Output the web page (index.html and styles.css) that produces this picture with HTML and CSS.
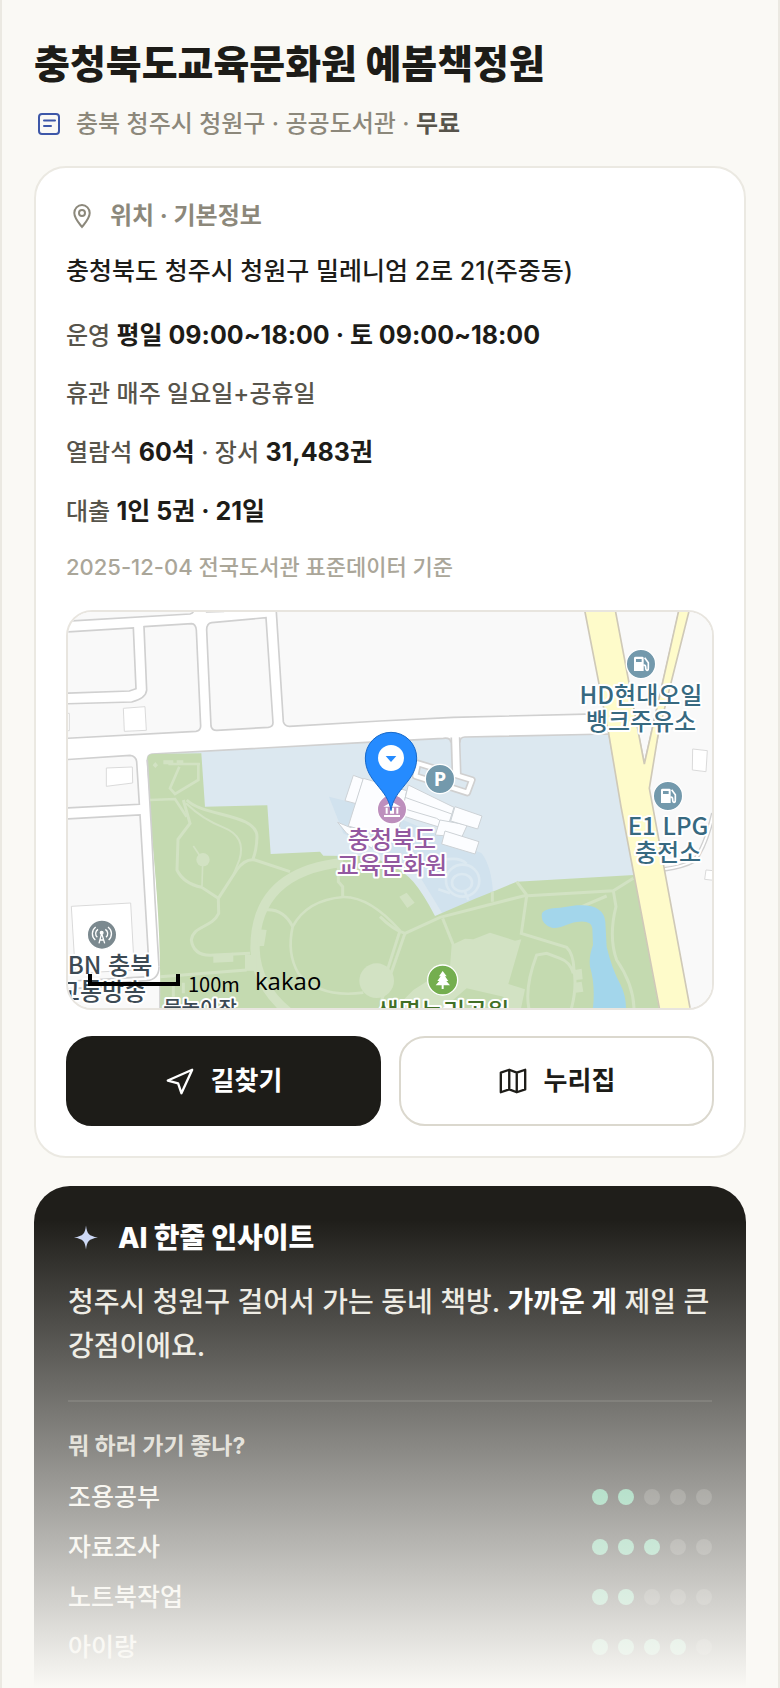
FILE: index.html
```html
<!DOCTYPE html>
<html lang="ko">
<head>
	<meta charset="utf-8">
	<meta name="viewport" content="width=device-width, initial-scale=1">
	<title>충청북도교육문화원 예봄책정원</title>
	<link rel="stylesheet" href="styles.css">
</head>
<body>
	<main class="screen">
		<header class="head">
			<h1>충청북도교육문화원 예봄책정원</h1>
			<p class="meta">
				<svg class="meta-icon" viewBox="0 0 30 30" fill="none" stroke="#3d57a8" stroke-width="2" stroke-linecap="round"><rect x="5" y="5" width="20" height="20" rx="3"/><path d="M10 11.5h11M10 17h7"/></svg>
				<span>충북 청주시 청원구 · 공공도서관 · <b>무료</b></span>
			</p>
		</header>

		<section class="card">
			<h2 class="card-title">
				<svg viewBox="0 0 32 32" fill="none" stroke="#8c887b" stroke-width="2"><path d="M16 27C12 22 8.300 18 8.300 13A7.700 8 0 0 1 23.700 13C23.700 18 20 22 16 27Z"/><circle cx="16" cy="13" r="3"/></svg>
				위치 · 기본정보
			</h2>
			<p class="address">충청북도 청주시 청원구 밀레니엄 2로 21(주중동)</p>
			<div class="info">
				<p>운영 <b>평일 09:00~18:00 · 토 09:00~18:00</b></p>
				<p>휴관 매주 일요일+공휴일</p>
				<p>열람석 <b>60석</b> · 장서 <b>31,483권</b></p>
				<p>대출 <b>1인 5권 · 21일</b></p>
			</div>
			<p class="source">2025-12-04 전국도서관 표준데이터 기준</p>

			<div class="map">
				<svg viewBox="0 0 644 396" preserveAspectRatio="xMidYMid slice" role="img" aria-label="지도">
					<!-- 지형은 3배 좌표로 그림 -->
					<g transform="scale(.33333) translate(-24 -36)" fill="none">
						<!-- 블록 -->
						<g fill="#f9f9f9" stroke="#d0d0d0" stroke-width="5">
							<path d="M0 65L390 42Q400 40 402 30V0H0Z"/>
							<path d="M440 36L490 34V0H440Z"/>
							<path d="M0 97L220 84L228 266L208 273L0 280Z"/>
							<path d="M252 80L395 71Q407 72 409 90L422 378Q422 392 408 394L0 416V312L215 306Q258 295 260 270Z"/>
							<path d="M440 90Q440 70 455 68L618 53L639 368Q639 380 625 382L470 391Q455 391 453 378Z"/>
							<path d="M648 20L670 365Q674 378 688 379L960 363L1180 352L1640 341L1600 20Z"/>
							<path d="M0 480L210 466Q228 468 230 485L238 613L0 625Z"/>
							<path d="M0 658L240 645L265 1065V1130L0 1145Z"/>
							<path d="M0 1168L300 1150V1240H0Z"/>
							<path d="M1660 20H1860L1753 492Z"/>
							<path d="M1880 20H1980V1240H1880L1760 560Z"/>
						</g>
						<g fill="#fff" stroke="#dadada" stroke-width="3">
							<path d="M190 325L255 320L259 391L193 394ZM139 504L217 501L218 549L139 559ZM10 340H28V392H10Z"/>
							<path d="M34 919L212 909L223 1110L46 1120Z"/>
							<path d="M1898 447L1942 452L1938 515L1897 510ZM1938 810L1970 813V842L1934 838Z"/>
						</g>
						<path d="M1812 808Q1870 800 1902 782Q1935 745 1960 640" stroke="#d0d0d0" stroke-width="14"/>
						<path d="M1812 808Q1870 800 1902 782Q1935 745 1960 640" stroke="#fff" stroke-width="6"/>
						<path d="M297 1100Q297 1138 260 1142L150 1150" stroke="#d0d0d0" stroke-width="5"/>

						<!-- 부지, 공원 -->
						<path d="M262 480Q262 464 276 462L960 425L1150 415Q1170 412 1172 425H1200Q1200 412 1215 411L1647 402L1726 840L1000 1000L300 960Z" fill="#dce8f0" stroke="#d0d0d0" stroke-width="5"/>
						<path d="M807 590L870 606L1030 660L1265 760Q1295 800 1299 880L1150 945L1080 830L850 700Z" fill="#d1e2ee"/>
						<path d="M262 480Q262 464 276 462L424 460L435 620L622 616L632 762L780 755L790 767L900 768Q1000 780 1060 845Q1090 880 1125 948L1245 896L1305 872L1370 845L1722 825L1800 1240H300Q305 1000 275 700Z" fill="#c4dab0"/>
						<path d="M262 480L275 700Q284 900 297 1100" stroke="#d0d0d0" stroke-width="5"/>
						<g stroke="#d2e2c3" stroke-width="9">
							<path d="M850 787Q585 815 585 1045Q588 1160 690 1240" stroke-width="28"/>
							<path d="M1020 992Q930 890 850 891Q740 900 698 980Q680 1060 715 1120Q780 1195 910 1178" stroke-width="8"/>
							<path d="M615 930Q670 925 698 980M835 800V845L848 860V890M1020 992L960 1180"/>
							<path d="M370 600L390 670L354 718L351 810Q370 850 425 862L475 895L476 940C455 985 400 975 394 1020Q400 1065 450 1066L570 1060"/>
							<path d="M475 895L530 810Q555 775 585 780L690 815M380 600C430 650 590 640 591 710Q590 750 578 780"/>
							<path d="M378 610Q430 660 490 682Q560 710 538 780L520 825" stroke-width="6"/>
							<path d="M400 738L420 768M428 790L426 858" stroke-width="5"/>
							<path d="M270 600L345 597L380 650M415 492V540L345 582L330 565L358 500M325 492H420" stroke-width="8"/>
							<path d="M310 487H340M350 487H370" stroke-width="12"/>
							<path d="M300 1130L560 1110M340 1155V1190M370 1148V1180"/>
							<path d="M960 950Q1000 990 1035 1000L1140 952L1390 888L1660 872L1720 835M1370 845L1400 885"/>
							<path d="M1400 888L1384 1000L1520 1042Q1540 1060 1542 1110Q1552 1170 1530 1240M1410 1240Q1390 1170 1430 1065L1460 1060L1500 1075Q1530 1085 1540 1120"/>
							<path d="M1560 922L1640 888M1660 872L1668 920Q1645 1010 1670 1080Q1725 1160 1722 1240"/>
							<path d="M1035 1000L965 1200M1148 955L1180 1035M1297 875V905"/>
						</g>
						<g fill="#d2e2c3">
							<circle cx="429" cy="779" r="20"/><circle cx="950" cy="1142" r="52"/>
							<path d="M597 988L620 990L612 1038H592ZM460 1064L520 1058V1085L460 1088ZM555 1065H590V1112H555ZM286 486L294 496L286 504L278 496ZM1018 890L1040 878L1064 908L1042 924Z"/>
							<path d="M1175 1035L1215 1016L1240 1018L1290 998L1365 1022L1384 1018L1345 1152L1395 1168L1380 1240H990L1060 1170L1170 1100Z"/>
							<path d="M1545 1110L1565 1106L1568 1138L1547 1140ZM1545 1148L1565 1145L1570 1175L1547 1178Z"/>
						</g>
						<path d="M1150 1225L1220 1165L1330 1190L1350 1240Z" fill="#c4dab0"/>
						<path d="M1446 940Q1452 925 1500 923L1550 916Q1630 910 1636 965L1640 1040Q1655 1105 1682 1155Q1700 1190 1698 1240H1597Q1608 1160 1590 1100Q1586 1070 1599 1035L1597 985Q1595 960 1550 966C1520 970 1500 988 1475 983Q1440 970 1446 940Z" fill="#a3d6eb"/>
						<g stroke="#dce9f1" stroke-width="8">
							<ellipse cx="1206" cy="848" rx="30" ry="26"/><ellipse cx="1208" cy="842" rx="50" ry="48"/><path d="M1170 880L1135 868M1215 875L1225 900M1150 780Q1200 770 1220 792"/>
						</g>

						<!-- 건물 -->
						<g fill="#fcfdff" stroke="#cdd2d6" stroke-width="3">
							<path d="M880 526L910 537L888 611L855 602Z"/>
							<path d="M910 535L1040 572L1010 720L865 678Z"/>
							<path d="M833 667L870 682L950 720L935 744L860 700Z"/>
							<path d="M1045 555L1182 622L1165 675L1028 625ZM1035 592L1175 642"/>
							<path d="M1028 625L1130 655L1150 668L1140 682L1020 645Z"/>
							<path d="M1140 660L1222 675L1205 712L1126 705Z"/>
							<path d="M1185 620L1266 648L1253 687L1172 663ZM1155 693L1257 725L1245 762L1145 732Z"/>
						</g>

						<!-- 주차장 길 -->
						<g stroke-linejoin="round">
							<path d="M1074 490L1066 528L1222 578L1236 540Z" stroke="#d0d0d0" stroke-width="22"/>
							<path d="M1186 412L1190 530" stroke="#d0d0d0" stroke-width="30"/>
							<path d="M1074 490L1066 528L1222 578L1236 540Z" stroke="#fff" stroke-width="12"/>
							<path d="M1186 400L1190 530" stroke="#fff" stroke-width="20"/>
						</g>

						<!-- 큰길 -->
						<path d="M1570 10L1575 36L1646 400L1683 620L1803 1250H1895L1768 565L1795 400L1893 10H1861L1753 492L1662 10Z" fill="#fefbca" stroke="#cfc9b8" stroke-width="5"/>

						<!-- 장소 아이콘 -->
						<g stroke="#fff" stroke-width="4">
							<circle cx="1743" cy="192" r="44" fill="#7399ac"/>
							<circle cx="1824" cy="588" r="44" fill="#7399ac"/>
							<circle cx="1140" cy="537" r="44" fill="#7399ac"/>
							<circle cx="996" cy="628" r="44" fill="#bd8fbd"/>
							<circle cx="126" cy="1004" r="44" fill="#7b898f"/>
							<circle cx="1148" cy="1140" r="45" fill="#74ae4f"/>
						</g>
						<g id="gas">
							<path d="M1722 174Q1722 170 1727 170H1747Q1751 170 1751 174V213H1722Z" fill="#fff"/>
							<path d="M1728 177H1745V186H1728Z" fill="#7399ac"/>
							<path d="M1750 196Q1757 194 1757 202Q1757 211 1761 211Q1765 211 1765 204V188L1754 173" stroke="#fff" stroke-width="5"/>
						</g>
						<use href="#gas" x="81" y="396"/>
						<path d="M970 620L996 605L1022 620ZM972 645H1020V651H972ZM977 623H983V641H977ZM990 623H1002V641H990ZM1009 623H1015V641H1009Z" fill="#fff"/>
						<g stroke="#fff" stroke-width="4"><path d="M117 1030L125 1000L134 1030M119 1020H132M112 1012A15 15 0 0 1 114 988M138 1012A15 15 0 0 0 136 988M106 1020A25 25 0 0 1 107 981M146 1020A25 25 0 0 0 144 981"/><circle cx="125" cy="998" r="4" fill="#fff"/></g>
						<path d="M1148 1113L1160 1129H1155L1165 1143H1159L1170 1156H1151V1167H1145V1156H1127L1138 1143H1132L1142 1129H1137Z" fill="#fff"/>
						<path d="M993 632C984 565 916 545 916 474A77 77 0 0 1 1070 474C1070 545 1002 565 993 632Z" fill="#258bff" stroke="#1768c8" stroke-width="3"/>
						<circle cx="993" cy="474" r="39" fill="#fff"/>
						<path d="M977 468H1009L993 486Z" fill="#258bff"/>
					</g>
					<g class="label label-gas">
						<text x="573" y="92">HD현대오일</text><text x="573" y="118">뱅크주유소</text>
						<text x="600" y="223">E1 LPG</text><text x="600" y="249">충전소</text>
					</g>
					<g class="label label-culture"><text x="324" y="236">충청북도</text><text x="324" y="262">교육문화원</text></g>
					<g class="label label-place"><text x="42" y="362">BN 충북</text><text x="34" y="388">교통방송</text><text class="label-small" x="132" y="404">물놀이장</text></g>
					<g class="label label-park"><text x="375" y="408">생명누리공원</text></g>
					<text class="parking" x="372" y="174">P</text>
					<path d="M22 362V372H110V362" fill="none" stroke="#000" stroke-width="4"/>
					<text class="scale" x="120" y="380">100m</text>
					<text class="kakao" x="187" y="378">kakao</text>
				</svg>
			</div>

			<div class="actions">
				<button type="button" class="btn btn-dark">
					<svg viewBox="0 0 32 32" fill="none" stroke="#fff" stroke-width="2.500" stroke-linejoin="round"><path d="M29 4L3 15.500L14 18.500L17.500 29Z"/></svg>
					길찾기
				</button>
				<a class="btn" href="#">
					<svg viewBox="0 0 32 32" fill="none" stroke="#1d1c18" stroke-width="2.500" stroke-linejoin="round"><path d="M3 7L12 4L20 7L29 4V25L20 28L12 25L3 28ZM12 4V25M20 7V28"/></svg>
					누리집
				</a>
			</div>
		</section>

		<section class="insight">
			<h2>
				<svg viewBox="0 0 36 36" fill="#cbd7f5"><path d="M18 5.500C19 13.500 20.500 16 30 17.500C20.500 19 19 21.500 18 29.500C17 21.500 15.500 19 6 17.500C15.500 16 17 13.500 18 5.500Z"/></svg>
				AI 한줄 인사이트
			</h2>
			<p class="summary">청주시 청원구 걸어서 가는 동네 책방. <b>가까운 게</b> 제일 큰 강점이에요.</p>
			<h3>뭐 하러 가기 좋나?</h3>
			<ul class="scores">
				<li>조용공부 <span class="dots"><i class="on"></i><i class="on"></i><i></i><i></i><i></i></span></li>
				<li>자료조사 <span class="dots"><i class="on"></i><i class="on"></i><i class="on"></i><i></i><i></i></span></li>
				<li>노트북작업 <span class="dots"><i class="on"></i><i class="on"></i><i></i><i></i><i></i></span></li>
				<li>아이랑 <span class="dots"><i class="on"></i><i class="on"></i><i class="on"></i><i class="on"></i><i></i></span></li>
			</ul>
		</section>
		<div class="fade"></div>
	</main>
</body>
</html>
```
FILE: styles.css
```css
*{
	margin:0;
	padding:0;
	box-sizing:border-box;
}
body{
	background:#faf9f5;
	color:#1d1c18;
	font-family:Inter,"Noto Sans CJK KR",sans-serif;
	font-size:24px;
	line-height:36px;
	font-weight:500;
	word-break:keep-all;
}
.screen{
	position:relative;
	display:flex;
	flex-direction:column;
	min-height:100vh;
	padding:38px 32px 0;
	border:solid #ebe9e2;
	border-width:0 2px;
	overflow:hidden;
}
h1{
	font-size:39px;
	line-height:52px;
	font-weight:800;
}
.meta{
	display:flex;
	align-items:center;
	gap:12px;
	margin-top:16px;
	color:#8c887b;
}
.meta-icon{
	width:30px;
	height:30px;
}
.meta b{
	color:#57544b;
	font-weight:700;
}
.card{
	margin-top:24px;
	padding:28px 30px 30px;
	background:#fff;
	border:2px solid #ebe9e2;
	border-radius:32px;
}
.card-title{
	display:flex;
	align-items:center;
	gap:12px;
	color:#8c887b;
	font-size:24px;
	line-height:40px;
	font-weight:700;
}
.card-title svg{
	width:32px;
	height:32px;
}
.address{
	margin-top:15px;
	font-size:25px;
	line-height:40px;
}
.info{
	display:grid;
	gap:22px;
	margin-top:26px;
	color:#57544b;
}
.info b{
	color:#1d1c18;
	font-size:25px;
	font-weight:700;
}
.source{
	margin-top:21px;
	color:#aaa699;
	font-size:22px;
	line-height:32px;
}
.map{
	height:400px;
	margin-top:27px;
	border:2px solid #e8e5df;
	border-radius:26px;
	overflow:hidden;
	background:#fff;
}
.map svg{
	display:block;
	width:100%;
	height:100%;
}
.label{
	font-family:"Noto Sans CJK KR",sans-serif;
	font-size:24px;
	font-weight:500;
	text-anchor:middle;
	stroke:#fff;
	stroke-width:4px;
	stroke-linejoin:round;
	paint-order:stroke;
}
.label-gas{
	fill:#376980;
}
.label-culture{
	fill:#9358a0;
}
.label-place{
	fill:#3c4a54;
}
.label-small{
	font-size:20px;
}
.label-park{
	fill:#427026;
}
.parking{
	font-family:"Noto Sans",sans-serif;
	font-size:20px;
	font-weight:700;
	text-anchor:middle;
	fill:#fff;
}
.scale{
	font-family:"Noto Sans CJK KR",sans-serif;
	font-size:20px;
	font-weight:400;
}
.kakao{
	font-family:"Open Sans",sans-serif;
	font-size:24px;
}
.actions{
	display:grid;
	grid-template-columns:1fr 1fr;
	gap:18px;
	margin-top:26px;
}
.btn{
	display:flex;
	align-items:center;
	justify-content:center;
	gap:16px;
	height:90px;
	border:2px solid #dbd8ce;
	border-radius:26px;
	background:#fff;
	color:#1d1c18;
	font-family:inherit;
	font-size:26px;
	line-height:36px;
	font-weight:700;
	text-decoration:none;
}
.btn svg{
	width:30px;
	height:30px;
}
.btn-dark{
	border-color:#1d1c18;
	background:#1d1c18;
	color:#fff;
}
.insight{
	flex:1;
	margin-top:28px;
	padding:32px 34px 12px;
	border-radius:36px 36px 0 0;
	background:#1f1e1a;
	color:#fff;
}
.insight h2{
	display:flex;
	align-items:center;
	gap:14px;
	font-size:28px;
	line-height:40px;
	font-weight:800;
}
.insight h2 svg{
	width:36px;
	height:36px;
}
.summary{
	margin-top:22px;
	padding-bottom:32px;
	border-bottom:2px solid #363530;
	color:#ebe9e0;
	font-size:28px;
	line-height:44px;
}
.summary b{
	color:#fff;
}
.insight h3{
	margin-top:26px;
	color:#d1cec4;
	font-size:23px;
	line-height:36px;
	font-weight:700;
}
.scores{
	margin-top:8px;
	list-style:none;
	color:#f5f3ec;
	font-size:25px;
}
.scores li{
	display:flex;
	align-items:center;
	justify-content:space-between;
	height:50px;
}
.dots{
	display:flex;
	gap:10px;
}
.dots i{
	width:16px;
	height:16px;
	border-radius:50%;
	background:#45443f;
}
.dots .on{
	background:#5cbf92;
}
/* 로그인 전에는 아래쪽을 가림 */
.fade{
	position:absolute;
	right:-2px;
	bottom:0;
	left:-2px;
	height:468px;
	background:linear-gradient(rgba(250,249,245,0),#faf9f5);
}
```
